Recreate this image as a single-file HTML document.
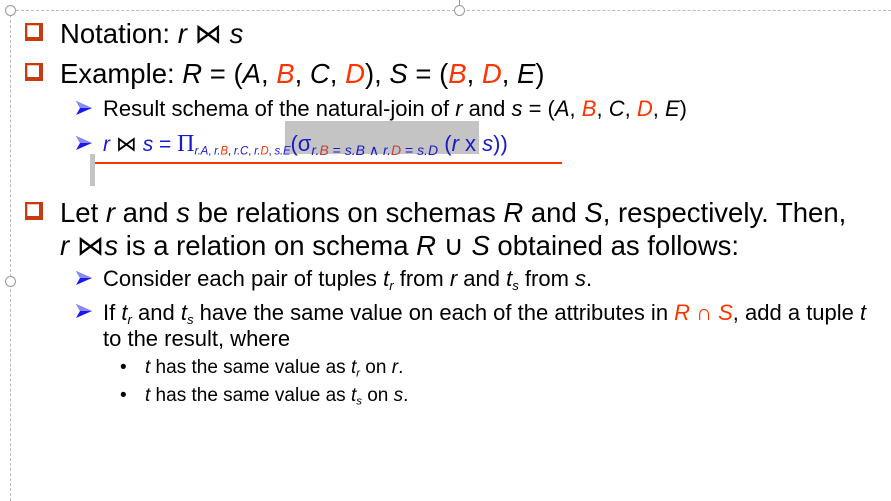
<!DOCTYPE html>
<html><head><meta charset="utf-8"><style>
body{margin:0;width:891px;height:501px;background:#fff;position:relative;overflow:hidden;font-family:"Liberation Sans",Arial,sans-serif;color:#000}
.a{position:absolute;white-space:nowrap;line-height:1}
.l1{font-size:27.5px}
.l2{font-size:22px}
.l3{font-size:19px}
i{font-style:italic}
.r{color:#ff3300}
.b{color:#1a1acc}
.cb{position:absolute;width:12px;height:12px;border:2px solid #c83a10;border-right-width:4px;border-bottom-width:4px;background:#fff;box-shadow:inset 1px 1px 0 #f3c0a8}
.ar{position:absolute;width:16px;height:14px}
.dot{position:absolute;width:9px;height:9px;border:1px solid #999;border-radius:50%;background:#fff}
sub{font-size:60%;vertical-align:-0.3em}
</style></head><body>
<div style="position:absolute;left:11px;top:10px;width:880px;border-top:1px dashed #bbb"></div>
<div style="position:absolute;left:10px;top:10px;height:491px;border-left:1px dashed #bbb"></div>
<div class="dot" style="left:5px;top:5px"></div>
<div class="dot" style="left:454px;top:5px"></div>
<div style="position:absolute;left:459px;top:0;height:5px;border-left:1px solid #999"></div>
<div class="dot" style="left:5px;top:276px"></div>

<div class="cb" style="left:25px;top:23px"></div>
<div class="a l1" style="left:60px;top:20px">Notation: <i>r</i> ⋈ <i>s</i></div>
<div class="cb" style="left:25px;top:63px"></div>
<div class="a l1" style="left:60px;top:60px">Example: <i>R</i> = (<i>A</i>, <i class="r">B</i>, <i>C</i>, <i class="r">D</i>), <i>S</i> = (<i class="r">B</i>, <i class="r">D</i>, <i>E</i>)</div>

<svg class="ar" style="left:76px;top:101px" viewBox="0 0 16 14"><path d="M0 0L16 7L0 14L4 7Z" fill="#1a1aee"/><path d="M0 0L16 7L4 7Z" fill="#8a8af5"/></svg>
<div class="a l2" style="left:103px;top:98px">Result schema of the natural-join of <i>r</i> and <i>s</i> = (<i>A</i>, <i class="r">B</i>, <i>C</i>, <i class="r">D</i>, <i>E</i>)</div>

<div style="position:absolute;left:285px;top:121px;width:194px;height:33px;background:#c4c4c4"></div>
<svg class="ar" style="left:76px;top:136px" viewBox="0 0 16 14"><path d="M0 0L16 7L0 14L4 7Z" fill="#1a1aee"/><path d="M0 0L16 7L4 7Z" fill="#8a8af5"/></svg>
<div class="a b" style="left:103px;top:132px;font-size:21px"><i>r</i> <span style="color:#000">⋈</span> <i>s</i> = <span style="font-family:'Liberation Serif',serif;font-size:24px">Π</span><sub style="font-size:11.5px;letter-spacing:-0.2px"><i>r.A</i>, <i>r.<span class="r">B</span></i>, <i>r.C</i>, <i>r.<span class="r">D</span></i>, <i>s.E</i></sub><span style="font-size:22px">(σ<sub style="font-size:14px"><i>r.<span style="color:#c04040">B</span></i> = <i>s.B</i> ∧ <i>r.<span style="color:#c04040">D</span></i> = <i>s.D</i></sub> (<i>r</i> x <i>s</i>))</span></div>
<div style="position:absolute;left:90px;top:162px;width:472px;height:2px;background:#ff3300"></div>
<div style="position:absolute;left:90px;top:154px;width:5px;height:32px;background:#c4c4c4"></div>

<div class="cb" style="left:25px;top:202px"></div>
<div class="a l1" style="left:60px;top:199px">Let <i>r</i> and <i>s</i> be relations on schemas <i>R</i> and <i>S</i>, respectively. Then,</div>
<div class="a l1" style="left:60px;top:232px"><i>r</i> ⋈<i>s</i> is a relation on schema <i>R</i> ∪ <i>S</i> obtained as follows:</div>

<svg class="ar" style="left:76px;top:271px" viewBox="0 0 16 14"><path d="M0 0L16 7L0 14L4 7Z" fill="#1a1aee"/><path d="M0 0L16 7L4 7Z" fill="#8a8af5"/></svg>
<div class="a l2" style="left:103px;top:268px">Consider each pair of tuples <i>t<sub>r</sub></i> from <i>r</i> and <i>t<sub>s</sub></i> from <i>s</i>.</div>
<svg class="ar" style="left:76px;top:304px" viewBox="0 0 16 14"><path d="M0 0L16 7L0 14L4 7Z" fill="#1a1aee"/><path d="M0 0L16 7L4 7Z" fill="#8a8af5"/></svg>
<div class="a l2" style="left:103px;top:302px">If <i>t<sub>r</sub></i> and <i>t<sub>s</sub></i> have the same value on each of the attributes in <i class="r">R</i><span class="r"> ∩ </span><i class="r">S</i>, add a tuple <i>t</i></div>
<div class="a l2" style="left:103px;top:328px">to the result, where</div>

<div class="a l3" style="left:120px;top:358px">•</div>
<div class="a l3" style="left:145px;top:358px"><i>t</i> has the same value as <i>t<sub>r</sub></i> on <i>r</i>.</div>
<div class="a l3" style="left:120px;top:386px">•</div>
<div class="a l3" style="left:145px;top:386px"><i>t</i> has the same value as <i>t<sub>s</sub></i> on <i>s</i>.</div>
</body></html>
